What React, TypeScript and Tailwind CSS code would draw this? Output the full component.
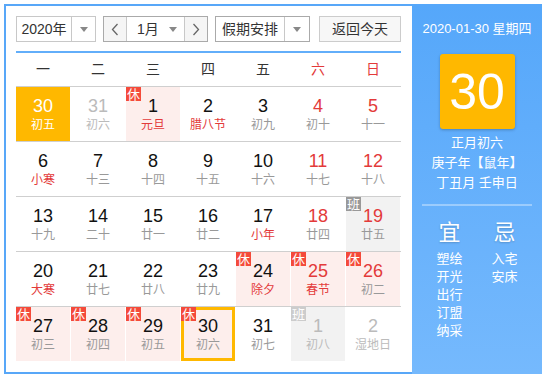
import React from "react";

type Cell = {
  d: string;
  l: string;
  nc?: string; // number color
  lc?: string; // lunar color
  bg?: string;
  badge?: "xiu" | "ban" | "banl";
  sel?: boolean;
  today?: boolean;
};

const RED = "text-[#e33a3a]";
const GRAY = "text-[#999]";
const BLACK = "text-[#111]";
const OTHER = "text-[#bbb]";
const PINK = "bg-[#fdeeec]";
const GRAYBG = "bg-[#f2f2f2]";

const rows: Cell[][] = [
  [
    { d: "30", l: "初五", sel: true },
    { d: "31", l: "初六", nc: OTHER, lc: OTHER },
    { d: "1", l: "元旦", lc: RED, bg: PINK, badge: "xiu" },
    { d: "2", l: "腊八节", lc: RED },
    { d: "3", l: "初九" },
    { d: "4", l: "初十", nc: RED },
    { d: "5", l: "十一", nc: RED },
  ],
  [
    { d: "6", l: "小寒", lc: RED },
    { d: "7", l: "十三" },
    { d: "8", l: "十四" },
    { d: "9", l: "十五" },
    { d: "10", l: "十六" },
    { d: "11", l: "十七", nc: RED },
    { d: "12", l: "十八", nc: RED },
  ],
  [
    { d: "13", l: "十九" },
    { d: "14", l: "二十" },
    { d: "15", l: "廿一" },
    { d: "16", l: "廿二" },
    { d: "17", l: "小年", lc: RED },
    { d: "18", l: "廿四", nc: RED },
    { d: "19", l: "廿五", nc: RED, bg: GRAYBG, badge: "ban" },
  ],
  [
    { d: "20", l: "大寒", lc: RED },
    { d: "21", l: "廿七" },
    { d: "22", l: "廿八" },
    { d: "23", l: "廿九" },
    { d: "24", l: "除夕", lc: RED, bg: PINK, badge: "xiu" },
    { d: "25", l: "春节", nc: RED, lc: RED, bg: PINK, badge: "xiu" },
    { d: "26", l: "初二", nc: RED, bg: PINK, badge: "xiu" },
  ],
  [
    { d: "27", l: "初三", bg: PINK, badge: "xiu" },
    { d: "28", l: "初四", bg: PINK, badge: "xiu" },
    { d: "29", l: "初五", bg: PINK, badge: "xiu" },
    { d: "30", l: "初六", bg: PINK, badge: "xiu", today: true },
    { d: "31", l: "初七" },
    { d: "1", l: "初八", nc: OTHER, lc: OTHER, bg: GRAYBG, badge: "banl" },
    { d: "2", l: "湿地日", nc: OTHER, lc: OTHER },
  ],
];

function Tri() {
  return (
    <div className="w-0 h-0 border-x-[4px] border-x-transparent border-t-[5px] border-t-[#888]" />
  );
}

function Chevron({ dir }: { dir: "l" | "r" }) {
  return (
    <svg width="8" height="13" viewBox="0 0 8 13">
      <polyline
        points={dir === "l" ? "6.5,1 1.5,6.5 6.5,12" : "1.5,1 6.5,6.5 1.5,12"}
        fill="none"
        stroke="#666"
        strokeWidth="1.3"
      />
    </svg>
  );
}

function DayCell({ c }: { c: Cell }) {
  const bg = c.sel ? "bg-[#ffb800]" : c.bg ?? "bg-white";
  const nc = c.sel ? "text-white" : c.nc ?? BLACK;
  const lc = c.sel ? "text-white" : c.lc ?? GRAY;
  return (
    <div
      className={`relative w-[54px] h-[54px] flex flex-col items-center pt-[9px] ${bg} ${
        c.today ? "shadow-[inset_0_0_0_3px_#ffb800]" : ""
      }`}
    >
      <div className={`text-[18px] leading-[20px] ${nc}`}>{c.d}</div>
      <div className={`text-[12px] leading-[18px] ${lc}`}>{c.l}</div>
      {c.badge && (
        <div
          className={`absolute top-0 left-0 w-[15px] h-[14px] flex items-center justify-center text-[13px] leading-none text-white ${
            c.badge === "xiu" ? "bg-[#f44a3a]" : c.badge === "ban" ? "bg-[#999]" : "bg-[#ccc]"
          }`}
        >
          {c.badge === "xiu" ? "休" : "班"}
        </div>
      )}
    </div>
  );
}

export default function App() {
  const weekdays = ["一", "二", "三", "四", "五", "六", "日"];
  return (
    <div className="w-[545px] h-[377px] bg-white p-[4px] font-['Liberation_Sans','Noto_Sans_CJK_SC',sans-serif]">
      <div className="flex w-[538px] h-[370px]">
        {/* Left calendar */}
        <div className="w-[408px] h-full border-l-2 border-t-2 border-b-2 border-[#58a7f8] bg-white pl-[10px] pr-[11px] pt-[10px]">
          {/* Toolbar */}
          <div className="flex h-[26px] text-[14px] text-[#333]">
            <div className="flex w-[80px] border border-[#c8c8c8]">
              <div className="flex-1 flex items-center justify-center">2020年</div>
              <div className="w-[24px] border-l border-[#c8c8c8] flex items-center justify-center">
                <Tri />
              </div>
            </div>
            <div className="ml-[7px] flex w-[105px] border border-[#aaa]">
              <div className="w-[23px] bg-[#f5f5f5] border-r border-[#c8c8c8] flex items-center justify-center">
                <Chevron dir="l" />
              </div>
              <div className="flex-1 flex items-center justify-between pl-[10px] pr-[7px]">
                <span>1月</span>
                <Tri />
              </div>
              <div className="w-[23px] bg-[#f5f5f5] border-l border-[#c8c8c8] flex items-center justify-center">
                <Chevron dir="r" />
              </div>
            </div>
            <div className="ml-[7px] flex w-[95px] border border-[#aaa]">
              <div className="flex-1 flex items-center justify-center">假期安排</div>
              <div className="w-[25px] border-l border-[#c8c8c8] flex items-center justify-center">
                <Tri />
              </div>
            </div>
            <div className="ml-auto w-[82px] bg-[#f7f7f7] border border-[#ccc] flex items-center justify-center">
              返回今天
            </div>
          </div>
          {/* Blue line */}
          <div className="mt-[9px] h-[2px] bg-[#62aefa]" />
          {/* Weekday header */}
          <div className="grid grid-cols-[repeat(7,54px)] gap-x-px h-[33px] items-center text-[14px]">
            {weekdays.map((w, i) => (
              <div
                key={w}
                className={`text-center ${i >= 5 ? "text-[#e33a3a]" : "text-[#333]"}`}
              >
                {w}
              </div>
            ))}
          </div>
          {/* Rows */}
          {rows.map((r, ri) => (
            <div key={ri} className="border-t border-[#cfcfcf]">
              <div className="grid grid-cols-[repeat(7,54px)] gap-x-px">
                {r.map((c, ci) => (
                  <DayCell key={ci} c={c} />
                ))}
              </div>
            </div>
          ))}
        </div>
        {/* Right panel */}
        <div className="w-[130px] h-full flex flex-col items-center text-white bg-gradient-to-b from-[#55a7fa] to-[#75b9fd]">
          <div className="mt-[16px] text-[13px] leading-[18px]">2020-01-30 星期四</div>
          <div className="mt-[16px] w-[75px] h-[75px] rounded-[3px] bg-[#ffb800] shadow-[0_1px_3px_rgba(0,0,0,0.25)] flex items-center justify-center text-[50px] leading-none">
            30
          </div>
          <div className="mt-[4px] text-[13px] leading-[20px] text-center">
            <div>正月初六</div>
            <div>庚子年【鼠年】</div>
            <div>丁丑月 壬申日</div>
          </div>
          <div className="mt-[11px] w-[110px] h-[2px] bg-white/35" />
          <div className="mt-[14px] flex w-[110px]">
            <div className="w-[55px] flex flex-col items-center">
              <div className="text-[22px] leading-[26px] [text-shadow:0_1px_2px_rgba(0,0,0,0.2)]">宜</div>
              <div className="mt-[4px] text-[13px] leading-[18px] text-center">
                <div>塑绘</div>
                <div>开光</div>
                <div>出行</div>
                <div>订盟</div>
                <div>纳采</div>
              </div>
            </div>
            <div className="w-[55px] flex flex-col items-center">
              <div className="text-[22px] leading-[26px] [text-shadow:0_1px_2px_rgba(0,0,0,0.2)]">忌</div>
              <div className="mt-[4px] text-[13px] leading-[18px] text-center">
                <div>入宅</div>
                <div>安床</div>
              </div>
            </div>
          </div>
        </div>
      </div>
    </div>
  );
}
